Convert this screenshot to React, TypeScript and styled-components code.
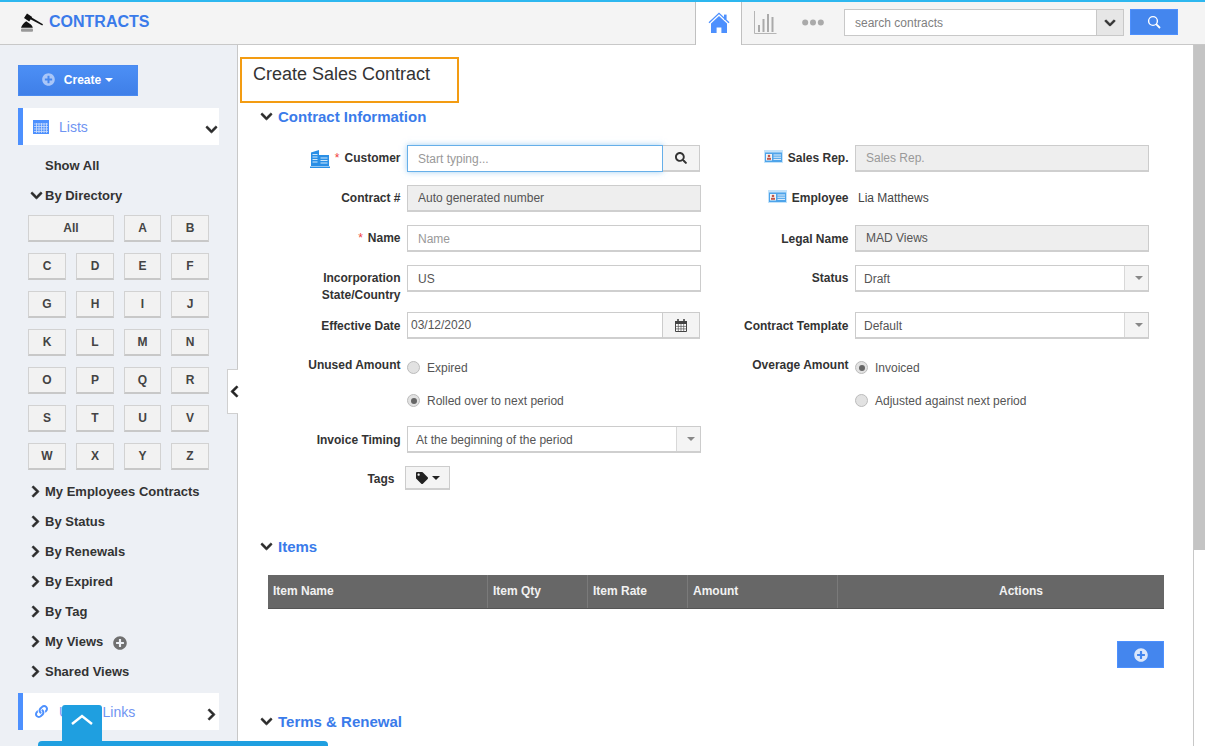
import React, {ReactElement, ReactNode} from 'react';
import styled, {createGlobalStyle} from 'styled-components';
import {
    FaChevronDown,
    FaChevronLeft,
    FaChevronRight,
    FaLink,
    FaPlusCircle,
    FaSearch,
    FaTag,
} from 'react-icons/fa';

const linkBlue = '#3a7bea';
const panelBlue = '#4d90fe';

const GlobalStyle = createGlobalStyle`
    html, body {
        margin: 0;
        padding: 0;
        height: 100%;
        overflow: hidden;
        background: #fff;
        font-family: "Liberation Sans", Arial, sans-serif;
        font-size: 12px;
        color: #333;
    }
    * {
        box-sizing: border-box;
    }
`;

function Gavel(): ReactElement {
    return (
        <svg width="24" height="20" viewBox="0 0 24 20">
            <path d="M7 1.5l5.2 3.6-3 4.4L4 5.9z" fill="#111" />
            <path d="M10 4.6l13 7.6-.7 1.2L9 6.500z" fill="#111" />
            <path d="M1 15.800c1-2.800 3-5 5.200-6.600l3.600 2.600c1.600.8 2.600 2.400 3 4z" fill="#111" />
            <rect x="1" y="16.600" width="12" height="3.200" rx="1" fill="#999" />
        </svg>
    );
}

function HomeIcon(): ReactElement {
    return (
        <svg width="22" height="22" viewBox="0 0 22 22">
            <path d="M1 10.800L11 1.400l10 9.400" fill="none" stroke="#4d90fe" strokeWidth="1.300" />
            <path d="M11 4L3 11.400V21h5.600v-5.600h4.800V21H19v-9.600z" fill="#4d90fe" />
            <rect x="16" y="2.600" width="2.600" height="5" fill="#4d90fe" />
        </svg>
    );
}

function ChartIcon(): ReactElement {
    return (
        <svg width="23" height="23" viewBox="0 0 23 23">
            <path d="M.5 0v22.500H22.500" fill="none" stroke="#b5b5b5" strokeWidth="1" />
            <rect x="4" y="14" width="2" height="7" fill="#aaa" />
            <rect x="8.500" y="8" width="2" height="13" fill="#aaa" />
            <rect x="13" y="3" width="2" height="18" fill="#aaa" />
            <rect x="17.500" y="6" width="2" height="15" fill="#aaa" />
        </svg>
    );
}

function DotsIcon(): ReactElement {
    return (
        <svg width="22" height="7" viewBox="0 0 22 7">
            <circle cx="3.200" cy="3.500" r="3" fill="#aaa" />
            <circle cx="11" cy="3.500" r="3" fill="#aaa" />
            <circle cx="18.800" cy="3.500" r="3" fill="#aaa" />
        </svg>
    );
}

function SearchGlass(): ReactElement {
    return (
        <svg width="14" height="14" viewBox="0 0 14 14">
            <circle cx="6" cy="6" r="4.400" fill="none" stroke="#fff" strokeWidth="1.400" />
            <path d="M9.200 9.200L13 13" stroke="#fff" strokeWidth="1.800" />
        </svg>
    );
}

function GridIcon(): ReactElement {
    return (
        <svg width="16" height="14" viewBox="0 0 16 14">
            <rect width="16" height="14" fill="#4d90fe" />
            <path
                d="M1 4h14M1 6.500h14M1 9h14M1 11.500h14M3.500 3v10M6 3v10M8.500 3v10M11 3v10M13.500 3v10"
                stroke="#cfe0fb"
                strokeWidth="0.800"
            />
        </svg>
    );
}

function BuildingIcon(): ReactElement {
    return (
        <svg width="20" height="18" viewBox="0 0 20 18">
            <path d="M1 2.500L9 0v16H1z" fill="#2a8fe6" />
            <path d="M9 5h10v11H9z" fill="#2a8fe6" />
            <path
                d="M2.500 4.500h5M2.500 7h5M2.500 9.500h5M2.500 12h5M10.500 8h7M10.500 10.500h7M10.500 13h7"
                stroke="#cfe8fb"
                strokeWidth="1"
            />
            <rect y="16.500" width="20" height="1.500" fill="#2a8fe6" />
        </svg>
    );
}

function CardIcon(): ReactElement {
    return (
        <svg width="19" height="13" viewBox="0 0 19 13">
            <rect width="19" height="13" fill="#c4e3fa" />
            <rect x="1" y="2.500" width="17" height="9.500" fill="#4ea4ea" />
            <rect x="2" y="4" width="6" height="6.500" fill="#f4f4f4" />
            <circle cx="5" cy="6" r="1.300" fill="#c0574a" />
            <rect x="3" y="7.800" width="4" height="2" fill="#c0574a" />
            <path d="M9.500 5h7.500M9.500 7.200h7.500M9.500 9.400h7.500" stroke="#eaf5fe" strokeWidth="1" />
        </svg>
    );
}

function CalendarIcon(): ReactElement {
    return (
        <svg width="12" height="13" viewBox="0 0 12 13">
            <path d="M.5 2.500h11v10H.5z" fill="#fff" stroke="#444" strokeWidth="1" />
            <rect y="2" width="12" height="3" fill="#444" />
            <rect x="2.200" y="0" width="1.600" height="3.500" fill="#444" />
            <rect x="8.200" y="0" width="1.600" height="3.500" fill="#444" />
            <path d="M3.300 5v7M6 5v7M8.700 5v7M.5 7.400h11M.5 9.900h11" stroke="#555" strokeWidth="0.700" />
        </svg>
    );
}

const Page = styled.div`
    display: flex;
    flex-direction: column;
    height: 746px;
    overflow: hidden;
`;

const TopBar = styled.header`
    display: flex;
    align-items: stretch;
    flex: 0 0 45px;
    padding-right: 27px;
    background: #f4f4f4;
    border-top: 2px solid #2db7ef;
    border-bottom: 1px solid #c8c8c8;
`;

const Brand = styled.div`
    display: flex;
    flex: 1;
    align-items: center;
    gap: 5px;
    padding: 0 0 2px 20px;
    color: ${linkBlue};
    font-size: 16px;
    font-weight: bold;
`;

const NavTab = styled.div<{$width: number; $active?: boolean}>`
    display: flex;
    align-items: center;
    justify-content: center;
    width: ${({$width}): number => $width}px;
    padding-bottom: 2px;
    background: ${({$active}): string => ($active ? '#fff' : 'transparent')};
    border: solid #c0c0c0;
    border-width: ${({$active}): string => ($active ? '0 1px' : '0')};
    margin-bottom: -1px;
`;

const SearchBox = styled.div`
    display: flex;
    align-self: flex-start;
    width: 280px;
    height: 27px;
    margin: 7px 6px 0 6px;
    background: #fff;
    border: 1px solid #c8c8c8;
`;

const SearchInput = styled.input`
    flex: 1;
    min-width: 0;
    padding: 0 10px;
    border: 0;
    outline: 0;
    font: 12px "Liberation Sans", Arial, sans-serif;
    &::placeholder {
        color: #808080;
        opacity: 1;
    }
`;

const SearchCaret = styled.div`
    display: flex;
    align-items: center;
    justify-content: center;
    width: 27px;
    background: #e6e6e6;
    border-left: 1px solid #c8c8c8;
    color: #333;
    font-size: 12px;
    svg {
        stroke: currentColor;
        stroke-width: 30px;
    }
`;

const SearchButton = styled.div`
    display: flex;
    align-self: flex-start;
    align-items: center;
    justify-content: center;
    width: 48px;
    height: 26px;
    margin-top: 7px;
    background: #4486ee;
    border: 1px solid ${panelBlue};
`;

const Body = styled.div`
    display: flex;
    flex: 1;
    min-height: 0;
`;

const Sidebar = styled.aside`
    position: relative;
    flex: 0 0 238px;
    padding: 20px 18px 0;
    background: #edf0f5;
    border-right: 1px solid #c8c8c8;
`;

const CreateButton = styled.div`
    display: flex;
    align-items: center;
    justify-content: center;
    gap: 9px;
    width: 120px;
    height: 31px;
    padding: 0 1px 2px 0;
    background: linear-gradient(#4c8ff5, #3f7fe8);
    border: 1px solid #4a8af0;
    color: #fff;
    font-size: 12px;
    font-weight: bold;
    svg {
        color: #a9c6f8;
        font-size: 13px;
    }
`;

const Caret = styled.span<{$color?: string}>`
    display: inline-block;
    margin-left: 4px;
    vertical-align: middle;
    border-top: 4px solid ${({$color}): string => $color || '#fff'};
    border-left: 4px solid transparent;
    border-right: 4px solid transparent;
`;

const Panel = styled.div<{$top: number}>`
    display: flex;
    align-items: center;
    width: 201px;
    height: 37px;
    margin-top: ${({$top}): number => $top}px;
    padding: 0 1px 0 10px;
    background: #fff;
    border-left: 5px solid ${panelBlue};
    color: #6f94f2;
    font-size: 14px;
`;

const PanelIcon = styled.span`
    display: flex;
    justify-content: center;
    width: 16px;
    color: ${panelBlue};
    font-size: 13px;
`;

const PanelTitle = styled.span`
    flex: 1;
    margin-left: 10px;
`;

const PanelToggle = styled.span`
    display: flex;
    color: #2b2b2b;
    font-size: 13px;
    padding-top: 5px;
    svg {
        stroke: currentColor;
        stroke-width: 30px;
    }
`;

const TreeList = styled.div`
    margin-top: 5px;
`;

const TreeItem = styled.div`
    position: relative;
    display: flex;
    align-items: center;
    height: 30px;
    padding-left: 27px;
    color: #333;
    font-size: 13px;
    font-weight: bold;
`;

const TreeChevron = styled.span<{$open?: boolean}>`
    position: absolute;
    left: ${({$open}): number => ($open ? 12 : 11)}px;
    display: flex;
    font-size: 13px;
    color: #2b2b2b;
    svg {
        width: auto;
        stroke: currentColor;
        stroke-width: 30px;
    }
`;

const AddView = styled.span`
    display: flex;
    margin: 3px 0 0 10px;
    color: #707070;
    font-size: 14px;
`;

const LetterGrid = styled.div`
    display: grid;
    grid-template-columns: 38px 38px 37px 38px;
    grid-auto-rows: 27px;
    gap: 11px 10px;
    margin: 5px 0 6px 10px;
`;

const LetterButton = styled.div<{$wide?: boolean}>`
    display: flex;
    align-items: center;
    justify-content: center;
    grid-column: ${({$wide}): string => ($wide ? 'span 2' : 'auto')};
    background: #f2f2f2;
    border: 1px solid #d2d2d2;
    border-bottom: 2px solid #c8c8c8;
    color: #444;
    font-weight: bold;
`;

const CollapseHandle = styled.div`
    position: absolute;
    top: 324px;
    right: -1px;
    display: flex;
    align-items: center;
    justify-content: center;
    width: 11px;
    height: 45px;
    padding-left: 3px;
    background: #fff;
    border: 1px solid #d0d0d0;
    border-right: 0;
    color: #222;
    font-size: 13px;
    svg {
        flex: none;
        stroke: currentColor;
        stroke-width: 30px;
    }
`;

const ScrollTop = styled.div`
    position: absolute;
    top: 660px;
    left: 62px;
    display: flex;
    justify-content: center;
    width: 40px;
    height: 37px;
    padding-top: 8px;
    background: #1f9fe0;
    border-radius: 3px 3px 0 0;
`;

const FooterBar = styled.div`
    position: absolute;
    top: 696px;
    left: 38px;
    width: 290px;
    height: 8px;
    background: #1f9fe0;
    border-radius: 4px 4px 0 0;
    z-index: 2;
`;

const Main = styled.main`
    flex: 1;
    min-width: 0;
    padding: 12px 0 0 2px;
`;

const Title = styled.h1`
    width: 219px;
    height: 46px;
    margin: 0;
    padding: 5px 0 0 11px;
    border: 2px solid #f39c12;
    color: #333;
    font-size: 18px;
    font-weight: normal;
    line-height: 20px;
`;

const SectionHead = styled.h2<{$top: number}>`
    display: flex;
    align-items: center;
    gap: 5px;
    height: 18px;
    margin: ${({$top}): number => $top}px 0 0 20px;
    color: ${linkBlue};
    font-size: 15px;
    font-weight: bold;
    svg {
        color: #2b2b2b;
        font-size: 13px;
        stroke: currentColor;
        stroke-width: 30px;
    }
`;

const FormColumns = styled.div`
    display: flex;
    margin-top: 20px;
`;

const FormColumn = styled.div<{$width: number}>`
    display: flex;
    flex-direction: column;
    flex: 0 0 ${({$width}): number => $width}px;
    min-width: 0;
`;

const Field = styled.div<{$height?: number}>`
    display: flex;
    height: ${({$height}): number => $height || 40}px;
`;

const Label = styled.div<{$width?: number; $top?: number}>`
    display: flex;
    justify-content: flex-end;
    align-items: baseline;
    flex: 0 0 ${({$width}): number => $width || 167}px;
    padding: ${({$top}): number => $top || 5}px 6.5px 0 0;
    color: #333;
    font-weight: bold;
    line-height: 17px;
    text-align: right;
`;

const Required = styled.span`
    margin-right: 5px;
    color: #f04040;
    font-weight: normal;
`;

const LabelIcon = styled.span`
    display: flex;
    align-self: flex-start;
    margin-right: 5px;
`;

const Input = styled.input<{$locked?: boolean; $lowered?: boolean}>`
    flex: 0 0 294px;
    width: 294px;
    height: 27px;
    padding: ${({$lowered}): string => ($lowered ? '1px 10px 0' : '0 10px')};
    background: ${({$locked}): string => ($locked ? '#eeeeee' : '#fff')};
    border: 1px solid #cccccc;
    border-bottom: 2px solid #cfcfcf;
    outline: 0;
    color: #555;
    font: 12px "Liberation Sans", Arial, sans-serif;
    &::placeholder {
        color: #999;
        opacity: 1;
    }
`;

const InputGroup = styled.div`
    display: flex;
    flex: 0 0 293px;
    height: 27px;
`;

const FocusInput = styled(Input)`
    flex: 1;
    width: auto;
    min-width: 0;
    border: 1px solid #66afe9;
    box-shadow: 0 0 6px rgba(102, 175, 233, 0.6);
`;

const DateInput = styled(Input)`
    flex: 1;
    width: auto;
    min-width: 0;
    padding: 0 3px;
`;

const AddonButton = styled.div`
    display: flex;
    align-items: center;
    justify-content: center;
    flex: 0 0 37px;
    background: #f4f4f4;
    border: 1px solid #cccccc;
    border-bottom: 2px solid #cfcfcf;
    border-left: 0;
    color: #333;
    font-size: 12px;
`;

const Select = styled.div`
    display: flex;
    flex: 0 0 294px;
    height: 27px;
    background: #fff;
    border: 1px solid #cccccc;
    border-bottom: 2px solid #cfcfcf;
`;

const SelectValue = styled.div`
    display: flex;
    align-items: center;
    flex: 1;
    padding: 1px 0 0 8px;
    color: #555;
`;

const SelectArrow = styled.div`
    display: flex;
    align-items: center;
    justify-content: center;
    flex: 0 0 24px;
    background: #f4f4f4;
    border-left: 1px solid #d8d8d8;
`;

const PlainValue = styled.div`
    padding: 5px 0 0 3px;
    color: #444;
    line-height: 17px;
`;

const RadioStack = styled.div`
    margin-top: -1px;
`;

const RadioOption = styled.div`
    display: flex;
    align-items: center;
    gap: 7px;
    height: 33px;
    color: #555;
`;

const RadioDot = styled.span<{$checked?: boolean}>`
    display: flex;
    align-items: center;
    justify-content: center;
    width: 13px;
    height: 13px;
    background: #e2e2e2;
    border: 1px solid #bcbcbc;
    border-radius: 50%;
    &::after {
        content: '';
        display: ${({$checked}): string => ($checked ? 'block' : 'none')};
        width: 6px;
        height: 6px;
        background: #666;
        border-radius: 50%;
    }
`;

const TagButton = styled.div`
    display: flex;
    align-items: center;
    justify-content: center;
    flex: 0 0 45px;
    height: 24px;
    margin-left: 4px;
    background: #f4f4f4;
    border: 1px solid #cccccc;
    border-bottom: 2px solid #cfcfcf;
    color: #222;
    font-size: 12px;
`;

const ItemsTable = styled.div`
    display: grid;
    grid-template-columns: 219px 100px 100px 150px 1fr;
    width: 896px;
    height: 34px;
    margin: 20px 0 0 28px;
    background: #676767;
    border-bottom: 1px solid #555;
`;

const ItemsHeading = styled.div<{$offset?: number}>`
    display: flex;
    align-items: center;
    justify-content: ${({$offset}): string => ($offset ? 'center' : 'flex-start')};
    padding: 0 0 1px ${({$offset}): number => $offset || 5}px;
    border-left: 1px solid #7a7a7a;
    color: #f2f2f2;
    font-weight: bold;
    &:first-child {
        border-left: 0;
    }
`;

const AddRow = styled.div`
    display: flex;
    justify-content: flex-end;
    width: 924px;
    margin-top: 32px;
`;

const AddButton = styled.div`
    display: flex;
    align-items: center;
    justify-content: center;
    width: 47px;
    height: 27px;
    background: #4486ee;
    border: 1px solid ${panelBlue};
    color: #dbe7fb;
    font-size: 14px;
`;

const Scrollbar = styled.div`
    flex: 0 0 12px;
    background: #fff;
    border-left: 1px solid #c8c8c8;
`;

const ScrollThumb = styled.div`
    height: 505px;
    background: #c4c4c4;
`;

const letters = 'ABCDEFGHIJKLMNOPQRSTUVWXYZ'.split('');
const treeItems = ['My Employees Contracts', 'By Status', 'By Renewals', 'By Expired', 'By Tag'];

function Tree({open, children}: {open?: boolean; children: ReactNode}): ReactElement {
    return (
        <TreeItem>
            <TreeChevron $open={open}>{open ? <FaChevronDown /> : <FaChevronRight />}</TreeChevron>
            {children}
        </TreeItem>
    );
}

function SelectBox({value}: {value: string}): ReactElement {
    return (
        <Select>
            <SelectValue>{value}</SelectValue>
            <SelectArrow>
                <Caret $color="#888" />
            </SelectArrow>
        </Select>
    );
}

export default function App(): ReactElement {
    return (
        <Page>
            <GlobalStyle />
            <TopBar>
                <Brand>
                    <Gavel />
                    CONTRACTS
                </Brand>
                <NavTab $width={47} $active>
                    <HomeIcon />
                </NavTab>
                <NavTab $width={46}>
                    <ChartIcon />
                </NavTab>
                <NavTab $width={50}>
                    <DotsIcon />
                </NavTab>
                <SearchBox>
                    <SearchInput placeholder="search contracts" readOnly />
                    <SearchCaret>
                        <FaChevronDown />
                    </SearchCaret>
                </SearchBox>
                <SearchButton>
                    <SearchGlass />
                </SearchButton>
            </TopBar>
            <Body>
                <Sidebar>
                    <CreateButton>
                        <FaPlusCircle />
                        <span>
                            Create
                            <Caret />
                        </span>
                    </CreateButton>
                    <Panel $top={12}>
                        <PanelIcon>
                            <GridIcon />
                        </PanelIcon>
                        <PanelTitle>Lists</PanelTitle>
                        <PanelToggle>
                            <FaChevronDown />
                        </PanelToggle>
                    </Panel>
                    <TreeList>
                        <TreeItem>Show All</TreeItem>
                        <Tree open>By Directory</Tree>
                        <LetterGrid>
                            <LetterButton $wide>All</LetterButton>
                            {letters.map(letter => (
                                <LetterButton key={letter}>{letter}</LetterButton>
                            ))}
                        </LetterGrid>
                        {treeItems.map(item => (
                            <Tree key={item}>{item}</Tree>
                        ))}
                        <Tree>
                            My Views
                            <AddView>
                                <FaPlusCircle />
                            </AddView>
                        </Tree>
                        <Tree>Shared Views</Tree>
                    </TreeList>
                    <Panel $top={7}>
                        <PanelIcon>
                            <FaLink />
                        </PanelIcon>
                        <PanelTitle>Useful Links</PanelTitle>
                        <PanelToggle>
                            <FaChevronRight />
                        </PanelToggle>
                    </Panel>
                    <CollapseHandle>
                        <FaChevronLeft />
                    </CollapseHandle>
                    <ScrollTop>
                        <svg width="24" height="12" viewBox="0 0 24 12">
                            <path d="M2 11L12 3l10 8" fill="none" stroke="#fff" strokeWidth="2.500" />
                        </svg>
                    </ScrollTop>
                    <FooterBar />
                </Sidebar>
                <Main>
                    <Title>Create Sales Contract</Title>
                    <SectionHead $top={4}>
                        <FaChevronDown />
                        Contract Information
                    </SectionHead>
                    <FormColumns>
                        <FormColumn $width={448}>
                            <Field>
                                <Label>
                                    <LabelIcon>
                                        <BuildingIcon />
                                    </LabelIcon>
                                    <Required>*</Required>
                                    Customer
                                </Label>
                                <InputGroup>
                                    <FocusInput placeholder="Start typing..." readOnly />
                                    <AddonButton>
                                        <FaSearch />
                                    </AddonButton>
                                </InputGroup>
                            </Field>
                            <Field>
                                <Label>Contract #</Label>
                                <Input $locked value="Auto generated number" readOnly />
                            </Field>
                            <Field>
                                <Label>
                                    <Required>*</Required>
                                    Name
                                </Label>
                                <Input $lowered placeholder="Name" readOnly />
                            </Field>
                            <Field $height={47}>
                                <Label>
                                    Incorporation
                                    <br />
                                    State/Country
                                </Label>
                                <Input $lowered value="US" readOnly />
                            </Field>
                            <Field>
                                <Label $top={6}>Effective Date</Label>
                                <InputGroup>
                                    <DateInput value="03/12/2020" readOnly />
                                    <AddonButton>
                                        <CalendarIcon />
                                    </AddonButton>
                                </InputGroup>
                            </Field>
                            <Field $height={74}>
                                <Label>Unused Amount</Label>
                                <RadioStack>
                                    <RadioOption>
                                        <RadioDot />
                                        Expired
                                    </RadioOption>
                                    <RadioOption>
                                        <RadioDot $checked />
                                        Rolled over to next period
                                    </RadioOption>
                                </RadioStack>
                            </Field>
                            <Field>
                                <Label $top={6}>Invoice Timing</Label>
                                <SelectBox value="At the beginning of the period" />
                            </Field>
                            <Field>
                                <Label $width={161}>Tags</Label>
                                <TagButton>
                                    <FaTag />
                                    <Caret $color="#222" />
                                </TagButton>
                            </Field>
                        </FormColumn>
                        <FormColumn $width={505}>
                            <Field>
                                <Label>
                                    <LabelIcon>
                                        <CardIcon />
                                    </LabelIcon>
                                    Sales Rep.
                                </Label>
                                <Input $locked placeholder="Sales Rep." readOnly />
                            </Field>
                            <Field>
                                <Label>
                                    <LabelIcon>
                                        <CardIcon />
                                    </LabelIcon>
                                    Employee
                                </Label>
                                <PlainValue>Lia Matthews</PlainValue>
                            </Field>
                            <Field>
                                <Label $top={6}>Legal Name</Label>
                                <Input $locked value="MAD Views" readOnly />
                            </Field>
                            <Field $height={47}>
                                <Label>Status</Label>
                                <SelectBox value="Draft" />
                            </Field>
                            <Field>
                                <Label $top={6}>Contract Template</Label>
                                <SelectBox value="Default" />
                            </Field>
                            <Field $height={74}>
                                <Label>Overage Amount</Label>
                                <RadioStack>
                                    <RadioOption>
                                        <RadioDot $checked />
                                        Invoiced
                                    </RadioOption>
                                    <RadioOption>
                                        <RadioDot />
                                        Adjusted against next period
                                    </RadioOption>
                                </RadioStack>
                            </Field>
                        </FormColumn>
                    </FormColumns>
                    <SectionHead $top={31}>
                        <FaChevronDown />
                        Items
                    </SectionHead>
                    <ItemsTable>
                        <ItemsHeading>Item Name</ItemsHeading>
                        <ItemsHeading>Item Qty</ItemsHeading>
                        <ItemsHeading>Item Rate</ItemsHeading>
                        <ItemsHeading>Amount</ItemsHeading>
                        <ItemsHeading $offset={40}>Actions</ItemsHeading>
                    </ItemsTable>
                    <AddRow>
                        <AddButton>
                            <FaPlusCircle />
                        </AddButton>
                    </AddRow>
                    <SectionHead $top={44}>
                        <FaChevronDown />
                        Terms &amp; Renewal
                    </SectionHead>
                </Main>
                <Scrollbar>
                    <ScrollThumb />
                </Scrollbar>
            </Body>
        </Page>
    );
}
